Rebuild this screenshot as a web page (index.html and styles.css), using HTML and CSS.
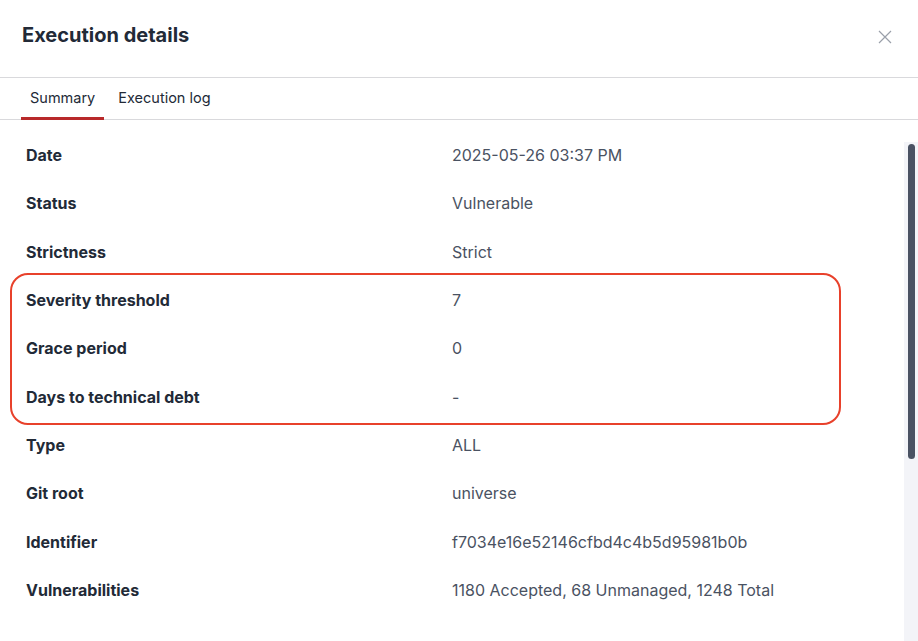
FILE: index.html
```html
<!DOCTYPE html>
<html lang="en">
<head>
<meta charset="utf-8">
<title>Execution details</title>
<link rel="stylesheet" href="styles.css">
</head>
<body>
<div class="dialog">
  <header class="dialog-header">
    <h1 class="dialog-title">Execution details</h1>
    <button class="close-btn" aria-label="Close">
      <svg width="14" height="14" viewBox="0 0 14 14"><path d="M1 1 L13 13 M13 1 L1 13" stroke="#9aa0aa" stroke-width="1.2" fill="none"/></svg>
    </button>
  </header>
  <nav class="tabs">
    <div class="tab tab-active">Summary</div>
    <div class="tab">Execution log</div>
  </nav>
  <div class="content">
    <div class="rows">
      <div class="row"><div class="label">Date</div><div class="value">2025-05-26 03:37 PM</div></div>
      <div class="row"><div class="label">Status</div><div class="value">Vulnerable</div></div>
      <div class="row"><div class="label">Strictness</div><div class="value">Strict</div></div>
      <div class="highlight">
        <div class="row"><div class="label">Severity threshold</div><div class="value">7</div></div>
        <div class="row"><div class="label">Grace period</div><div class="value">0</div></div>
        <div class="row"><div class="label">Days to technical debt</div><div class="value">-</div></div>
      </div>
      <div class="row"><div class="label">Type</div><div class="value">ALL</div></div>
      <div class="row"><div class="label">Git root</div><div class="value">universe</div></div>
      <div class="row"><div class="label">Identifier</div><div class="value">f7034e16e52146cfbd4c4b5d95981b0b</div></div>
      <div class="row"><div class="label">Vulnerabilities</div><div class="value">1180 Accepted, 68 Unmanaged, 1248 Total</div></div>
    </div>
    <div class="scrollbar"><div class="thumb"></div></div>
  </div>
</div>
</body>
</html>
```
FILE: styles.css
```css
* { box-sizing: border-box; }
html, body { margin: 0; padding: 0; background: #ffffff; }
body {
  font-family: Inter, Roboto, "Liberation Sans", Arial, sans-serif;
  color: #222a37;
  width: 918px;
  height: 641px;
  overflow: hidden;
}
.dialog { display: flex; flex-direction: column; height: 641px; }
.dialog-header {
  height: 78px;
  display: flex;
  align-items: center;
  justify-content: space-between;
  padding: 0 26px 8px 22px;
  border-bottom: 1px solid #d9d9dc;
}
.dialog-title {
  margin: 0;
  font-size: 20px;
  font-weight: 700;
  color: #222a37;
}
.close-btn {
  background: none;
  border: 0;
  padding: 0;
  display: flex;
  margin-top: 4px;
}
.tabs {
  display: flex;
  gap: 5px;
  height: 42px;
  padding-left: 21px;
  border-bottom: 1px solid #d9d9dc;
}
.tab {
  font-size: 14.5px;
  color: #222a37;
  padding: 0 9px;
  display: flex;
  align-items: center;
  padding-bottom: 2px;
}
.tab-active {
  border-bottom: 3px solid #b8292a;
  padding-bottom: 0;
  margin-bottom: -1px;
}
.content {
  flex: 1;
  display: flex;
  min-height: 0;
}
.rows {
  flex: 1;
  padding: 11px 26px 0 26px;
  display: flex;
  flex-direction: column;
}
.row {
  display: grid;
  grid-template-columns: 1fr 1fr;
  height: 48.33px;
  align-items: center;
  font-size: 16px;
}
.label { font-weight: 700; color: #222a37; }
.value { color: #4a5262; }
.highlight { position: relative; }
.highlight::before {
  content: "";
  position: absolute;
  top: -3px;
  bottom: -4px;
  left: -16px;
  right: 37px;
  border: 2px solid #e8412b;
  border-radius: 18px;
  pointer-events: none;
}
.scrollbar {
  width: 14px;
  margin-top: 22px;
  background: #f3f4f8;
  padding: 2px 3px 0 4px;
}
.thumb {
  height: 315px;
  background: #4a5263;
  border-radius: 4px;
}
```
